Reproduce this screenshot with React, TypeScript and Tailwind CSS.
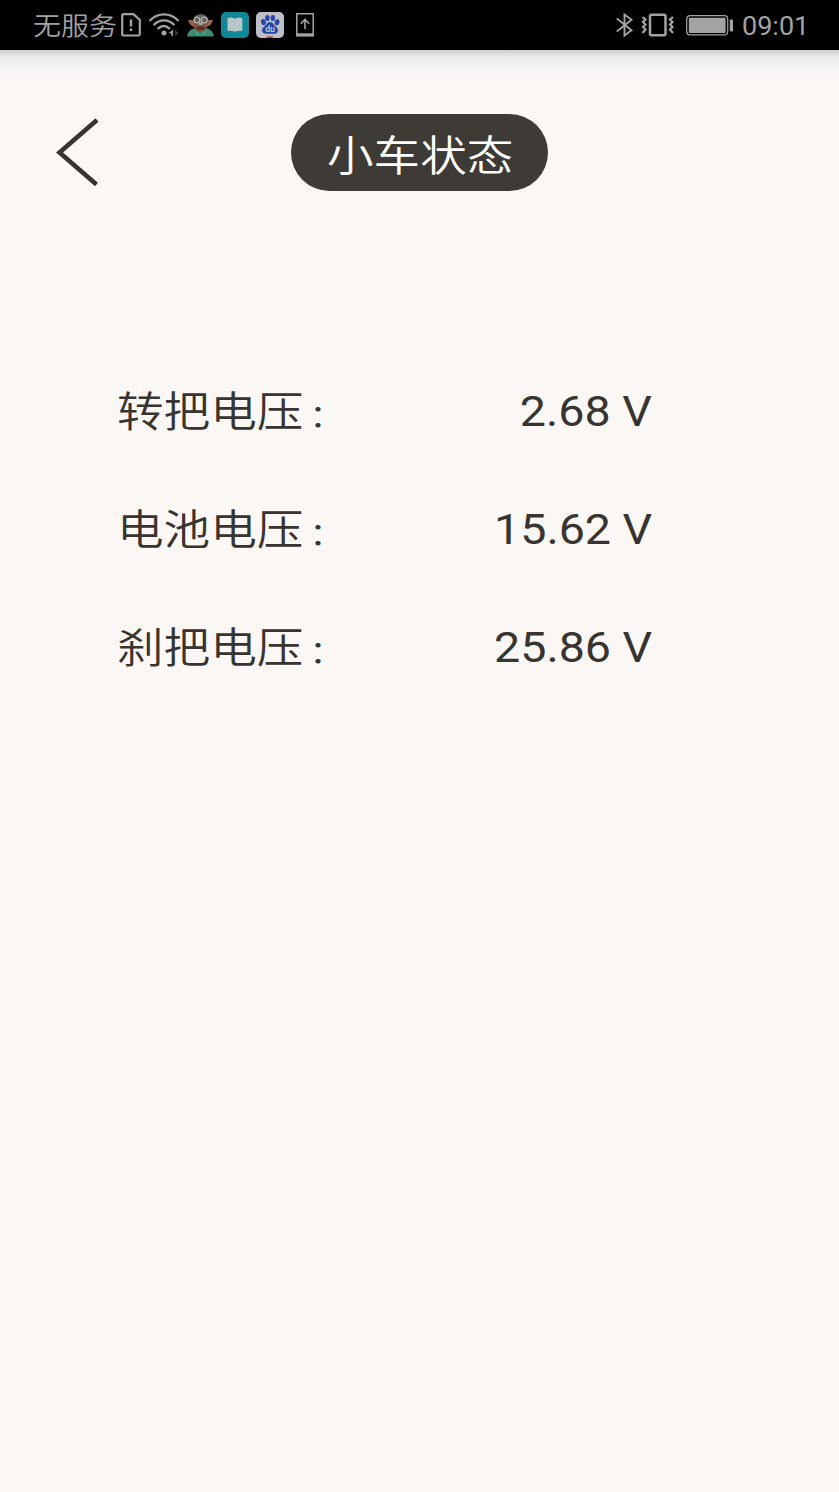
import React from 'react';

const readings = [
  { label: '转把电压', value: '2.68 V' },
  { label: '电池电压', value: '15.62 V' },
  { label: '刹把电压', value: '25.86 V' },
];

function SimAlertIcon() {
  return (
    <svg width="20" height="24" viewBox="0 0 20 24" fill="none" stroke="#a3a3a3" strokeWidth="2.2">
      <path d="M1.2 2.5Q1.2 1.2 2.5 1.2H12.5L18.8 7V21.2Q18.8 22.5 17.5 22.5H2.5Q1.2 22.5 1.2 21.2Z" />
      <path d="M10 6.5V13.5M10 15.5V18" strokeWidth="2.4" />
    </svg>
  );
}

function WifiIcon() {
  return (
    <svg width="30" height="24" viewBox="0 0 30 24" fill="none" stroke="#a3a3a3" strokeWidth="2.3" strokeLinecap="round">
      <path d="M1.2 7.2C9 -.6 21 -.6 28.8 7.2" />
      <path d="M5.2 11.5C10.5 5.9 19.5 5.9 24.8 11.5" />
      <path d="M9.3 15.4C12.5 12.2 17 12.2 20.2 15.4" />
      <circle cx="15" cy="20" r="2.5" fill="#a3a3a3" stroke="none" />
      <path d="M19.5 20.3L24 16.5V23.5L22.2 22V20.3Z" fill="#a3a3a3" stroke="none" />
      <path d="M26.2 17L29.5 20.2L26.2 23.3Z" fill="#3c3c3c" stroke="none" />
    </svg>
  );
}

function AvatarIcon() {
  return (
    <svg width="27" height="24" viewBox="0 0 27 24">
      <path d="M0 23.5Q1 17 7 15.5L13.5 19L20 15.5Q26 17 27 23.5Z" fill="#3d8a72" />
      <path d="M7 16.5L13.5 23L20 16.5L17 22H10Z" fill="#57a98a" />
      <path d="M1 7.5Q4 6 7 8L8 14Q3 13 1 7.5ZM26 7.5Q23 6 20 8L19 14Q24 13 26 7.5Z" fill="#9b6551" />
      <path d="M6 9H21L20 15L16 19H11L7 15Z" fill="#835342" />
      <path d="M6 8Q7 1 13.5 1T22 8L18 11H9Z" fill="#62605d" />
      <circle cx="10" cy="7" r="2.9" fill="none" stroke="#b2b3ae" strokeWidth="1.2" />
      <circle cx="17.2" cy="7" r="2.9" fill="none" stroke="#b2b3ae" strokeWidth="1.2" />
      <path d="M12 10H15.5V12H12Z" fill="#a9aaa5" />
      <path d="M8.5 14.5Q13.5 12.5 18.5 14.5L16 17H11Z" fill="#4c3026" />
    </svg>
  );
}

function ReaderIcon() {
  return (
    <svg width="28" height="26" viewBox="0 0 28 26">
      <rect width="28" height="26" rx="5" fill="#108897" />
      <path d="M6.5 6Q10.5 4.8 13.9 6.7V19.8Q10.5 18.3 6.5 19ZM13.9 6.7Q17.5 4.8 21.3 6V19Q17.5 18.3 13.9 19.8Z" fill="#b9c7c8" />
    </svg>
  );
}

function BaiduIcon() {
  return (
    <svg width="28" height="26" viewBox="0 0 29 26" preserveAspectRatio="none">
      <rect width="29" height="26" rx="5" fill="#bdbfc4" />
      <g fill="#2546a8">
        <ellipse cx="7.7" cy="10" rx="2.5" ry="3.1" transform="rotate(-12 7.7 10)" />
        <ellipse cx="11.8" cy="5.9" rx="2.3" ry="3" />
        <ellipse cx="17.4" cy="5.9" rx="2.3" ry="3" />
        <ellipse cx="21.8" cy="10.3" rx="2.4" ry="3" transform="rotate(12 21.8 10.3)" />
        <path d="M14.5 10C11.5 10 11 13 8.2 14.7C4.5 17.7 6.5 22 10.5 21.7H19C22.8 21.7 24.2 17.7 20.8 14.8C18.2 13 17.7 10 14.5 10Z" />
      </g>
      <text x="14.6" y="20.5" textAnchor="middle" fontFamily="Roboto, sans-serif" fontSize="9" fontWeight="700" fill="#bdbfc4">du</text>
      <path d="M10.5 24.5H18L17 26H11.5Z" fill="#a83b53" />
    </svg>
  );
}

function UploadIcon() {
  return (
    <svg width="18" height="24" viewBox="0 0 18 24" fill="none" stroke="#a3a3a3">
      <rect x=".8" y=".8" width="16.4" height="22" strokeWidth="1.5" />
      <path d="M0 21.7H18" strokeWidth="2.8" />
      <path d="M9 16V7M4.8 10.8L9 6.5L13.2 10.8" strokeWidth="1.6" />
    </svg>
  );
}

function BluetoothIcon() {
  return (
    <svg width="17" height="24" viewBox="0 0 17 24" fill="none" stroke="#a3a3a3" strokeWidth="1.9">
      <path d="M.8 5.5L15.5 17.2L8.5 22.5V1.5L15.5 6.8L.8 18.5" />
    </svg>
  );
}

function VibrateIcon() {
  return (
    <svg width="34" height="24" viewBox="0 0 34 24" fill="none" stroke="#a3a3a3" strokeWidth="2.2">
      <rect x="9" y="1.7" width="15.5" height="20.6" rx="1.5" strokeWidth="2.5" />
      <path d="M1.5 4L4.5 6.5L2 9L4.5 11.5L2 14L4.5 16.5L1.5 20" />
      <path d="M32 4L29 6.5L31.5 9L29 11.5L31.5 14L29 16.5L32 20" />
    </svg>
  );
}

function BatteryIcon() {
  return (
    <svg width="48" height="21" viewBox="0 0 48 21">
      <rect x=".7" y=".7" width="41" height="19.2" rx="3.5" fill="none" stroke="#a3a3a3" strokeWidth="1.2" />
      <rect x="2.8" y="2.8" width="36.8" height="15.2" rx="1" fill="#a3a3a3" />
      <rect x="43.8" y="4.5" width="3.2" height="12" rx="1" fill="#a3a3a3" />
    </svg>
  );
}

function StatusBar() {
  return (
    <div className="flex h-[50px] items-center justify-between bg-black pr-[30px] pl-[33px] text-[25px] text-[#a3a3a3]">
      <div className="flex items-center">
        <div className="w-[88px] pt-[4px] whitespace-nowrap">
          <span className="inline-block origin-left scale-x-[1.12] font-[350]">无服务</span>
        </div>
        <SimAlertIcon />
        <div className="ml-[8px]"><WifiIcon /></div>
        <div className="ml-[8px]"><AvatarIcon /></div>
        <div className="ml-[7px]"><ReaderIcon /></div>
        <div className="ml-[7px]"><BaiduIcon /></div>
        <div className="ml-[12px]"><UploadIcon /></div>
      </div>
      <div className="flex items-center">
        <BluetoothIcon />
        <div className="ml-[8px]"><VibrateIcon /></div>
        <div className="ml-[11px]"><BatteryIcon /></div>
        <div className="ml-[7px] flex w-[68px] justify-end pt-[3px]">
          <span className="origin-right scale-x-[1.08]">09:01</span>
        </div>
      </div>
    </div>
  );
}

export default function App() {
  return (
    <div className="flex min-h-[1492px] w-full flex-col bg-[#fbf7f4] font-['Roboto','Noto_Sans_CJK_SC',sans-serif] text-[#383430] [&_svg]:block">
      <StatusBar />
      <div className="h-[26px] bg-linear-to-b from-[#cfcfcf] via-[#ededec] via-30% to-[#fbf7f4]" />

      <header className="grid h-[153px] grid-cols-[1fr_257px_1fr] items-center">
        <button type="button" aria-label="返回" className="ml-[56px] w-fit pb-[2px]">
          <svg width="43" height="68" viewBox="0 0 43 68" fill="none" stroke="#383430" strokeWidth="4.6">
            <path d="M41 2L3.5 34.5L40.5 66.5" />
          </svg>
        </button>
        <h1 className="flex h-[77px] items-center justify-center rounded-full bg-[#3e3a36] pt-[8px] pl-[1px] text-[41.6px] leading-none font-[350] text-white">
          <span className="scale-x-[1.12] whitespace-nowrap">小车状态</span>
        </h1>
      </header>

      <main className="mt-[124px] pr-[187px] pl-[117px] text-[41.6px]">
        {readings.map(({ label, value }) => (
          <div key={label} className="flex h-[118px] items-center justify-between whitespace-nowrap">
            <span className="origin-left scale-x-[1.12] pt-[2px] font-[350]">
              {label}
              <span className="pl-[5px] text-[32px]">：</span>
            </span>
            <span className="origin-right scale-x-[1.12]">{value}</span>
          </div>
        ))}
      </main>
    </div>
  );
}
